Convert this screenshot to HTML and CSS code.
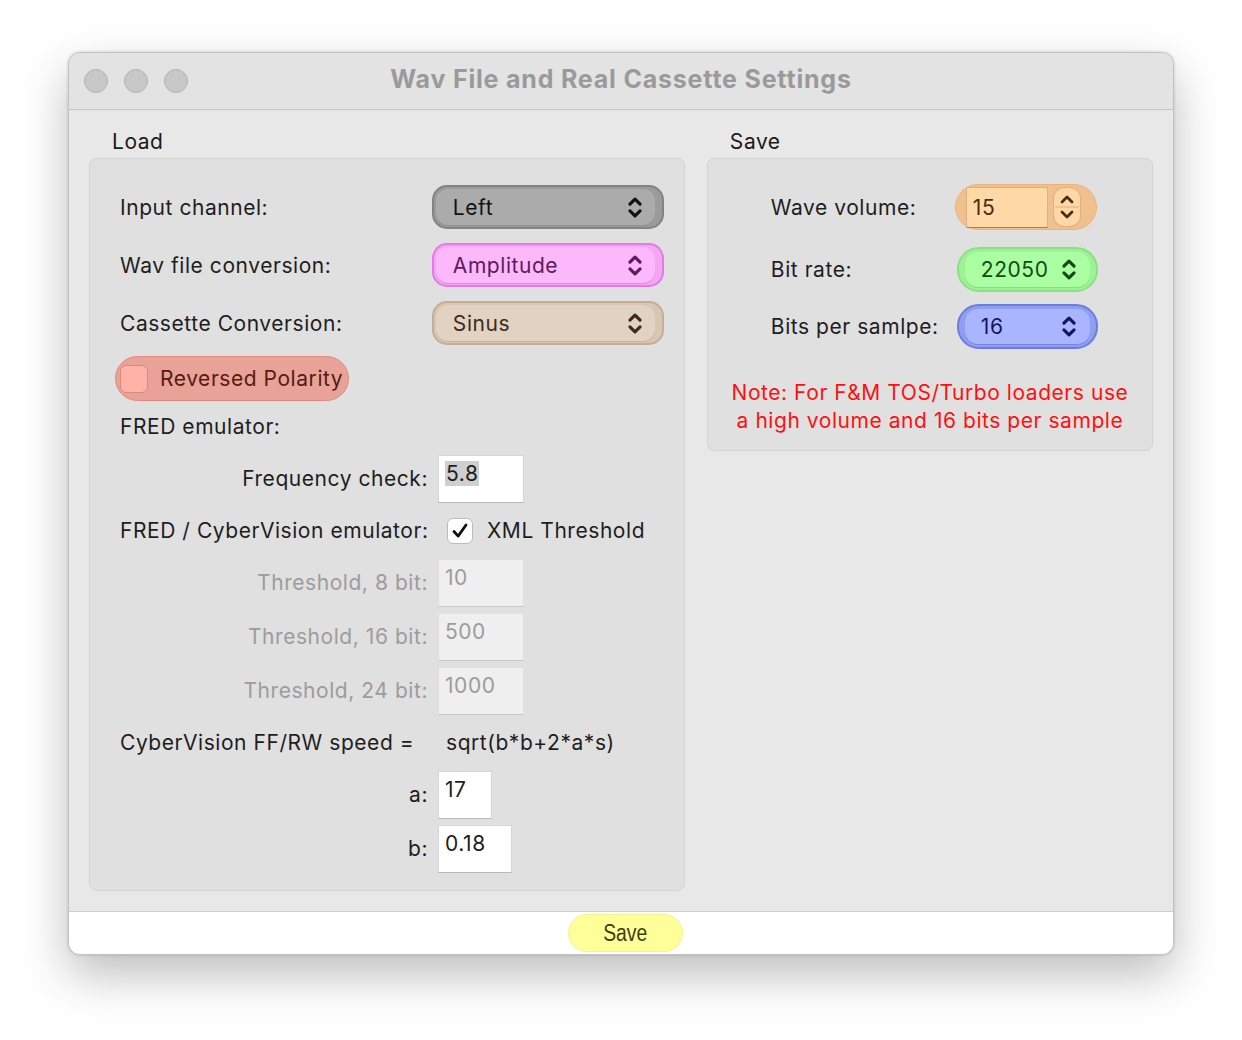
FILE: index.html
```html
<!DOCTYPE html>
<html>
<head>
<meta charset="utf-8">
<link rel="stylesheet" href="styles.css">
</head>
<body>
<div class="window">
  <div class="titlebar">
    <div class="lights"><span class="light"></span><span class="light"></span><span class="light"></span></div>
    <div class="title">Wav File and Real Cassette Settings</div>
    <div class="spacer"></div>
  </div>
  <div class="content">
    <div class="col col-load">
      <div class="group-label">Load</div>
      <div class="group load-box">
        <div class="row popup-row">
          <div class="lbl">Input channel:</div>
          <div class="popup p-gray"><div class="popup-inner"><span>Left</span>
            <svg class="chev" viewBox="0 0 14 24"><path d="M2.5 9 L7 4.5 L11.5 9 M2.5 15 L7 19.5 L11.5 15"/></svg></div></div>
        </div>
        <div class="row popup-row gap14">
          <div class="lbl">Wav file conversion:</div>
          <div class="popup p-pink"><div class="popup-inner"><span>Amplitude</span>
            <svg class="chev" viewBox="0 0 14 24"><path d="M2.5 9 L7 4.5 L11.5 9 M2.5 15 L7 19.5 L11.5 15"/></svg></div></div>
        </div>
        <div class="row popup-row gap14">
          <div class="lbl">Cassette Conversion:</div>
          <div class="popup p-tan"><div class="popup-inner"><span>Sinus</span>
            <svg class="chev" viewBox="0 0 14 24"><path d="M2.5 9 L7 4.5 L11.5 9 M2.5 15 L7 19.5 L11.5 15"/></svg></div></div>
        </div>
        <div class="polarity"><span class="pol-box"></span><span>Reversed Polarity</span></div>
        <div class="text-row mt14">FRED emulator:</div>
        <div class="row field-row mt16">
          <div class="lbl lbl-right">Frequency check:</div>
          <div class="field w86"><span class="sel">5.8</span></div>
        </div>
        <div class="row text-row mt16">
          <div class="lbl lbl-left">FRED / CyberVision emulator:</div>
          <span class="check"><svg viewBox="0 0 26 26"><path d="M6.5 13.5 L11 18.5 L19.5 6.5"/></svg></span>
          <span class="check-lbl">XML Threshold</span>
        </div>
        <div class="row field-row mt16 disabled">
          <div class="lbl lbl-right">Threshold, 8 bit:</div>
          <div class="field w86">10</div>
        </div>
        <div class="row field-row mt6 disabled">
          <div class="lbl lbl-right">Threshold, 16 bit:</div>
          <div class="field w86">500</div>
        </div>
        <div class="row field-row mt6 disabled">
          <div class="lbl lbl-right">Threshold, 24 bit:</div>
          <div class="field w86">1000</div>
        </div>
        <div class="row text-row mt16">
          <div class="lbl lbl-left">CyberVision FF/RW speed =</div>
          <span class="formula">sqrt(b*b+2*a*s)</span>
        </div>
        <div class="row field-row mt16">
          <div class="lbl lbl-right">a:</div>
          <div class="field w54">17</div>
        </div>
        <div class="row field-row mt6">
          <div class="lbl lbl-right">b:</div>
          <div class="field w74">0.18</div>
        </div>
      </div>
    </div>
    <div class="col col-save">
      <div class="group-label">Save</div>
      <div class="group save-box">
        <div class="srow h46">
          <div class="slbl">Wave volume:</div>
          <div class="spin">
            <div class="spin-field">15</div>
            <div class="stepper">
              <svg viewBox="0 0 26 38"><path d="M8 14 L13 9 L18 14 M8 24 L13 29 L18 24"/><line x1="1" y1="19" x2="25" y2="19"/></svg>
            </div>
          </div>
        </div>
        <div class="srow h45 mt17">
          <div class="slbl">Bit rate:</div>
          <div class="spop s-green"><div class="spop-inner"><span>22050</span>
            <svg class="chev" viewBox="0 0 14 24"><path d="M2.5 9 L7 4.5 L11.5 9 M2.5 15 L7 19.5 L11.5 15"/></svg></div></div>
        </div>
        <div class="srow h45 mt12">
          <div class="slbl">Bits per samlpe:</div>
          <div class="spop s-blue"><div class="spop-inner"><span>16</span>
            <svg class="chev" viewBox="0 0 14 24"><path d="M2.5 9 L7 4.5 L11.5 9 M2.5 15 L7 19.5 L11.5 15"/></svg></div></div>
        </div>
        <div class="note">Note: For F&amp;M TOS/Turbo loaders use<br>a high volume and 16 bits per sample</div>
      </div>
    </div>
  </div>
  <div class="bottombar">
    <div class="save-btn"><span>Save</span></div>
  </div>
</div>
</body>
</html>
```

FILE: styles.css
```css
html, body {
  margin: 0;
  padding: 0;
  background: #ffffff;
}
body {
  min-height: 1040px;
  padding-top: 52px;
  box-sizing: border-box;
  font-family: Inter, "Noto Sans", "Liberation Sans", sans-serif;
  font-size: 21px;
  letter-spacing: 0.55px;
  color: #1e1e1e;
}
.window {
  margin: 0 0 0 68px;
  width: 1106px;
  height: 903px;
  box-sizing: border-box;
  border: 1px solid #c2c2c2;
  border-radius: 12px;
  background: #e8e8e8;
  box-shadow: 0 20px 48px rgba(0,0,0,0.26), 0 0 3px rgba(0,0,0,0.18);
  display: flex;
  flex-direction: column;
  overflow: hidden;
}
.titlebar {
  height: 56px;
  flex: none;
  background: #e3e3e3;
  border-bottom: 1px solid #c6c6c6;
  display: grid;
  grid-template-columns: 1fr auto 1fr;
  align-items: center;
}
.lights {
  display: flex;
  gap: 16px;
  padding-left: 15px;
}
.light {
  width: 22px;
  height: 22px;
  border-radius: 50%;
  background: #c8c8c8;
  border: 1px solid #b2b2b2;
}
.title {
  font-weight: 700;
  font-size: 25px;
  color: #9a9a9a;
  letter-spacing: 0.8px;
  margin-top: -4px;
}
.content {
  flex: 1;
  display: flex;
  gap: 22px;
  padding: 20px 20px 0 20px;
}
.col-load { width: 597px; }
.col-save { width: 447px; }
.group-label {
  padding-left: 23px;
  line-height: 24px;
  height: 24px;
  margin-bottom: 4px;
  color: #1a1a1a;
}
.group {
  background: #e0e0e0;
  border: 1px solid #d3d3d3;
  border-radius: 7px;
  box-sizing: border-box;
}
.load-box {
  height: 733px;
  padding: 26px 20px 0 30px;
}
.row {
  display: flex;
  align-items: center;
}
.lbl, .slbl { white-space: nowrap; }
.popup-row {
  height: 44px;
  justify-content: space-between;
}
.gap14 { margin-top: 14px; }
.mt6 { margin-top: 6px; }
.mt12 { margin-top: 12px; }
.mt14 { margin-top: 14px; }
.mt16 { margin-top: 16px; }
.mt17 { margin-top: 17px; }
.popup {
  width: 232px;
  height: 44px;
  box-sizing: border-box;
  border-radius: 15px;
  border: 2px solid;
  padding: 2px 7px 2px 2px;
}
.popup-inner {
  height: 100%;
  border-radius: 12px;
  display: flex;
  align-items: center;
  justify-content: space-between;
  padding: 0 12px 0 17px;
  box-sizing: border-box;
}
.chev {
  width: 16px;
  height: 27px;
}
.chev path, .stepper path {
  fill: none;
  stroke: currentColor;
  stroke-width: 2.8;
  stroke-linecap: round;
  stroke-linejoin: round;
}
.p-gray { background: #9b9b9b; border-color: #838383; }
.p-gray .popup-inner { background: #ababab; color: #111; box-shadow: 0 1px 0 #8f8f8f; }
.p-pink { background: #f4a6f4; border-color: #e47ae4; }
.p-pink .popup-inner { background: #fbb8fb; color: #5c1b5c; box-shadow: 0 1px 0 #e08ae0; }
.p-tan { background: #d8c5b2; border-color: #c6ad96; }
.p-tan .popup-inner { background: #e2d2c2; color: #3c2b1c; box-shadow: 0 1px 0 #c9b29c; }

.polarity {
  margin-top: 11px;
  margin-left: -5px;
  width: 234px;
  height: 45px;
  box-sizing: border-box;
  border-radius: 23px;
  background: #e8a298;
  border: 1.5px solid #e2897b;
  display: flex;
  align-items: center;
  padding-left: 4px;
  gap: 12px;
  color: #581a12;
  white-space: nowrap;
}
.pol-box {
  width: 28px;
  height: 28px;
  box-sizing: border-box;
  border-radius: 6px;
  background: #ffb3a8;
  border: 1px solid #d98a7e;
}
.text-row {
  height: 24px;
  line-height: 24px;
  white-space: nowrap;
}
.field-row { height: 48px; }
.lbl-right, .lbl-left {
  width: 308px;
  flex: none;
  margin-right: 10px;
}
.lbl-right { text-align: right; }
.field {
  height: 48px;
  box-sizing: border-box;
  background: #ffffff;
  border: 1px solid #d6d6d6;
  border-bottom: 1px solid #b8b8b8;
  padding: 4px 6px 0 6px;
  line-height: 28px;
  align-self: flex-start;
}
.w86 { width: 86px; }
.w54 { width: 54px; }
.w74 { width: 74px; }
.field-row .lbl { line-height: 24px; }
.sel { background: #cfcfcf; padding: 0 1px; }
.disabled .lbl { color: #9c9c9c; }
.disabled .field { background: #efefef; color: #9c9c9c; border-color: #e0e0e0; border-bottom-color: #c8c8c8; }
.check {
  width: 26px;
  height: 26px;
  box-sizing: border-box;
  background: #fff;
  border: 1px solid #bcbcbc;
  border-radius: 6px;
  margin-left: 9px;
  display: flex;
}
.check svg { width: 24px; height: 24px; }
.check path { fill: none; stroke: #111; stroke-width: 3; stroke-linecap: round; stroke-linejoin: round; }
.check-lbl { margin-left: 14px; }
.formula { margin-left: 8px; }

.save-box {
  height: 293px;
  padding: 25px 0 0 63px;
}
.srow {
  display: flex;
  align-items: center;
}
.h46 { height: 46px; }
.h45 { height: 45px; }
.slbl { width: 184px; flex: none; }
.spin {
  width: 142px;
  height: 46px;
  box-sizing: border-box;
  border-radius: 23px;
  background: #f0c08e;
  border: 1.5px solid #e8b478;
  display: flex;
  align-items: center;
  padding-left: 10px;
}
.spin-field {
  width: 82px;
  height: 41px;
  box-sizing: border-box;
  background: #ffd8a8;
  border: 1px solid #dcb080;
  border-bottom: 1.5px solid #a08060;
  padding: 6px 0 0 6px;
  line-height: 28px;
  color: #4a2e10;
  align-self: flex-end;
  margin-bottom: 1px;
}
.stepper {
  width: 26px;
  height: 38px;
  margin-left: 6px;
  border-radius: 10px;
  background: #ffd6a6;
  box-shadow: 0 0 0 1px #e2b07c, 0 1px 1px rgba(0,0,0,0.15);
  color: #4a2e10;
}
.stepper svg { width: 26px; height: 38px; display: block; }
.stepper line { stroke: #e0b07a; stroke-width: 1; }
.spop {
  width: 141px;
  height: 45px;
  box-sizing: border-box;
  border-radius: 22px;
  border: 2px solid;
  padding: 3px 6px 3px 6px;
  margin-left: 2px;
}
.spop-inner {
  height: 100%;
  border-radius: 13px;
  display: flex;
  align-items: center;
  justify-content: space-between;
  padding: 0 13px 0 16px;
  box-sizing: border-box;
}
.s-green { background: #a0f098; border-color: #86e47e; }
.s-green .spop-inner { background: #aaffa2; color: #144a14; box-shadow: 0 1px 0 #86dc7e; }
.s-blue { background: #909ef0; border-color: #6c7ce4; }
.s-blue .spop-inner { background: #aab5ff; color: #10185a; box-shadow: 0 1px 0 #7886e4; }
.note {
  margin: 30px 0 0 -63px;
  text-align: center;
  line-height: 28px;
  color: #ff1010;
}

.bottombar {
  margin-top: auto;
  height: 42px;
  flex: none;
  background: #ffffff;
  border-top: 1px solid #cfcfcf;
  display: flex;
  justify-content: center;
  align-items: center;
}
.save-btn {
  width: 115px;
  height: 38px;
  border-radius: 19px;
  background: #ffff99;
  border: 1px solid #f4f48c;
  box-sizing: border-box;
  display: flex;
  align-items: center;
  justify-content: center;
  margin-left: 8px;
  color: #3e3e10;
}
.save-btn span {
  font-family: "Liberation Sans", sans-serif;
  font-size: 23px;
  letter-spacing: 0;
  display: inline-block;
  transform: scaleX(0.84);
}
```
